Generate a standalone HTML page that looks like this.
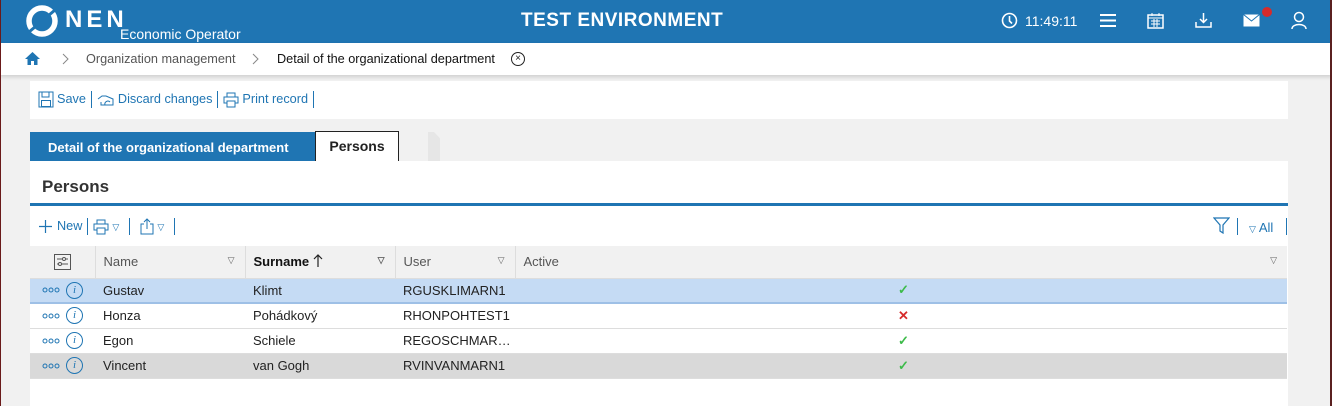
<!DOCTYPE html><html><head><style>
*{margin:0;padding:0;box-sizing:border-box}
body{width:1332px;height:406px;overflow:hidden;background:#f1f1f1;font-family:"Liberation Sans",sans-serif;position:relative;font-size:13px;color:#222}
.abs{position:absolute}
.hdr{left:0;top:0;width:1332px;height:43px;background:#1f75b3;color:#fff}
.bc{left:0;top:43px;width:1332px;height:32px;background:#fff;box-shadow:0 2px 4px rgba(0,0,0,.15)}
.sep{display:inline-block;width:1px;height:17px;background:#1f75b3;vertical-align:middle;margin:0 5px}
.blue{color:#1f75b3}
.ic{vertical-align:middle;margin-right:3px}
table{border-collapse:collapse;position:absolute;left:30px;top:246px;width:1257px}
td{height:25px;border-bottom:1px solid #ddd;padding-left:8px;font-size:13px}
th{height:32px;background:#f1f1f1;font-weight:normal;color:#555;text-align:left;padding-left:8px;border-right:1px solid #ddd;border-bottom:1px solid #ddd;position:relative}
th .t{position:absolute;right:10px;top:9px;font-size:9px;color:#666}
.inf{display:inline-block;width:17px;height:17px;border:1.3px solid #1f75b3;border-radius:50%;color:#1f75b3;font-size:11px;text-align:center;line-height:15px;margin-left:6px;vertical-align:middle;font-family:"Liberation Serif",serif;font-style:italic}
.ck{color:#3dbb4a;font-weight:bold}
</style></head><body>
<div class="abs" style="left:0;top:0;width:1px;height:406px;background:#6a1a1a;z-index:5"></div>
<div class="abs" style="right:0;top:0;width:2px;height:406px;background:#5a2020;z-index:5"></div>
<div class="abs hdr">
 <svg class="abs" style="left:26px;top:5px" width="32" height="32" viewBox="0 0 32 32"><circle cx="16" cy="16" r="13" fill="none" stroke="#fff" stroke-width="5.5"/><path d="M3 27 L29 5" stroke="#1f75b3" stroke-width="3"/></svg>
 <div class="abs" style="left:65px;top:6px;font-size:24px;font-weight:bold;letter-spacing:4px">NEN</div>
 <div class="abs" style="left:120px;top:26px;font-size:14px">Economic Operator</div>
 <div class="abs" style="left:521px;top:10px;font-size:19px;font-weight:bold;letter-spacing:.5px">TEST ENVIRONMENT</div>
 <svg class="abs" style="left:1001px;top:12px" width="17" height="17"><circle cx="8.5" cy="8.5" r="7" fill="none" stroke="#fff" stroke-width="1.6"/><path d="M8.5 4V9L11 11.5" stroke="#fff" stroke-width="1.6" fill="none"/></svg>
 <div class="abs" style="left:1025px;top:13px;font-size:14px">11:49:11</div>
 <svg class="abs" style="left:1100px;top:13px" width="16" height="15"><path d="M0 2H16M0 7.5H16M0 13H16" stroke="#fff" stroke-width="2"/></svg>
 <svg class="abs" style="left:1147px;top:12px" width="17" height="17"><rect x="1" y="3" width="15" height="13" fill="none" stroke="#fff" stroke-width="1.5"/><path d="M1 6H16M5 1V4M12 1V4M4 9H13M4 12H13M7 7V15M10 7V15" stroke="#fff" stroke-width="1"/></svg>
 <svg class="abs" style="left:1195px;top:12px" width="17" height="17"><path d="M8.5 1V10M5 7L8.5 10.5 12 7M1 10V15H16V10" stroke="#fff" stroke-width="1.5" fill="none"/></svg>
 <svg class="abs" style="left:1243px;top:14px" width="17" height="13"><rect x="0.5" y="0.5" width="16" height="12" fill="#fff"/><path d="M0.5 0.5L8.5 7 16.5 0.5" stroke="#1f75b3" fill="none"/></svg>
 <div class="abs" style="left:1262px;top:7px;width:10px;height:10px;border-radius:50%;background:#d62b2b"></div>
 <svg class="abs" style="left:1291px;top:11px" width="16" height="19"><circle cx="8" cy="6" r="4.5" fill="none" stroke="#fff" stroke-width="1.5"/><path d="M1 18C1 12 15 12 15 18" fill="none" stroke="#fff" stroke-width="1.5"/></svg>
</div>
<div class="abs bc">
 <svg class="abs" style="left:24px;top:8px" width="17" height="15"><path d="M8.5 1L1 8H3.5V14H7V10H10V14H13.5V8H16Z" fill="#1f75b3"/></svg>
 <svg class="abs" style="left:62px;top:10px" width="8" height="12"><path d="M1 1L6 6 1 11" stroke="#888" fill="none"/></svg>
 <div class="abs" style="left:86px;top:9px;color:#555;font-size:12.7px">Organization management</div>
 <svg class="abs" style="left:252px;top:10px" width="8" height="12"><path d="M1 1L6 6 1 11" stroke="#888" fill="none"/></svg>
 <div class="abs" style="left:277px;top:9px;color:#111;font-size:12.7px">Detail of the organizational department</div>
 <div class="abs" style="left:511px;top:9px;width:14px;height:14px;border:1.2px solid #222;border-radius:50%;font-size:10px;text-align:center;line-height:11px">×</div>
</div>
<div class="abs" style="left:30px;top:81px;width:1258px;height:38px;background:#fff;padding:10px 0 0 8px;font-size:12.7px">
 <svg class="ic" width="16" height="17"><rect x="1" y="1" width="14" height="15" fill="none" stroke="#1f75b3"/><rect x="4" y="1" width="7" height="5" fill="none" stroke="#1f75b3"/><rect x="3.5" y="9.5" width="9" height="6" fill="none" stroke="#1f75b3"/></svg><span class="blue">Save</span><span class="sep"></span><svg class="ic" width="18" height="14"><path d="M1 6L5 3 9 3 16 6 16 12 4 12 4 9" fill="none" stroke="#1f75b3"/><path d="M8 12A3 3 0 0 1 13 9" fill="none" stroke="#1f75b3"/></svg><span class="blue">Discard changes</span><span class="sep"></span><svg class="ic" width="16" height="16"><rect x="4" y="1" width="8" height="4" fill="none" stroke="#1f75b3"/><rect x="1" y="5" width="14" height="6" fill="none" stroke="#1f75b3"/><rect x="4" y="9" width="8" height="6" fill="#fff" stroke="#1f75b3"/></svg><span class="blue">Print record</span><span class="sep"></span>
</div>
<svg class="abs" style="left:30px;top:132px" width="410" height="30"><polygon points="0,0 293,0 315,29 0,29" fill="#1f75b3"/><polygon points="398,0 404,0 432,29 398,29" fill="#e6e6e6"/></svg>
<div class="abs" style="left:48px;top:140px;color:#fff;font-weight:bold;font-size:13px">Detail of the organizational department</div>
<div class="abs" style="left:315px;top:131px;width:84px;height:31px;border:1px solid #222;background:#fff;font-weight:bold;font-size:14px;text-align:center;line-height:29px">Persons</div>
<div class="abs" style="left:30px;top:161px;width:1258px;height:245px;background:#fff"></div>
<div class="abs" style="left:42px;top:177px;font-size:17px;font-weight:bold;color:#333">Persons</div>
<div class="abs" style="left:30px;top:203px;width:1258px;height:3px;background:#1f75b3"></div>
<div class="abs" style="left:39px;top:218px;font-size:12.7px;white-space:nowrap"><svg class="ic" style="margin-right:5px" width="13" height="13"><path d="M6.5 0V13M0 6.5H13" stroke="#1f75b3" stroke-width="1.2"/></svg><span class="blue">New</span><span class="sep"></span><svg class="ic" width="16" height="16"><rect x="4" y="1" width="8" height="4" fill="none" stroke="#1f75b3"/><rect x="1" y="5" width="14" height="6" fill="none" stroke="#1f75b3"/><rect x="4" y="9" width="8" height="6" fill="#fff" stroke="#1f75b3"/></svg><span class="blue" style="font-size:9px">▽</span><span class="sep" style="margin-left:10px"></span><svg class="ic" style="margin-left:5px" width="14" height="17"><path d="M4 6H1V16H13V6H10M7 11V1M4 4L7 1 10 4" fill="none" stroke="#1f75b3"/></svg><span class="blue" style="font-size:9px">▽</span><span class="sep" style="margin-left:10px"></span></div>
<svg class="abs" style="left:1213px;top:217px" width="17" height="17"><path d="M1 1H16L10 8V16L7 14V8Z" fill="none" stroke="#1f75b3" stroke-width="1.2"/></svg>
<div class="abs" style="left:1237px;top:218px;width:1px;height:17px;background:#1f75b3"></div>
<div class="abs blue" style="left:1249px;top:220px"><span style="font-size:9px">▽</span> All</div>
<div class="abs" style="left:1286px;top:218px;width:1px;height:17px;background:#1f75b3"></div>
<table>
<tr><th style="width:65px;text-align:center;padding:0"><svg width="17" height="16" style="vertical-align:middle"><rect x="0.5" y="0.5" width="16" height="15" fill="none" stroke="#555"/><path d="M3 5H14M3 10H14" stroke="#555"/><circle cx="10" cy="5" r="1.5" fill="#fff" stroke="#555"/><circle cx="6" cy="10" r="1.5" fill="#fff" stroke="#555"/></svg></th><th style="width:150px">Name<span class="t">▽</span></th><th style="width:150px;color:#111;font-weight:bold">Surname <svg width="10" height="13" style="vertical-align:-1px"><path d="M5 1V13M1 5L5 1 9 5" fill="none" stroke="#222" stroke-width="1.2"/></svg><span class="t">▽</span></th><th style="width:120px">User<span class="t">▽</span></th><th style="border-right:0">Active<span class="t">▽</span></th></tr>
<tr style="background:#c5dbf4;border-bottom:2px solid #9ec0e6"><td style="padding-left:12px"><svg width="18" height="6" style="vertical-align:middle"><circle cx="3" cy="3" r="2" fill="none" stroke="#1f75b3"/><circle cx="9" cy="3" r="2" fill="none" stroke="#1f75b3"/><circle cx="15" cy="3" r="2" fill="none" stroke="#1f75b3"/></svg><span class="inf">i</span></td><td>Gustav</td><td>Klimt</td><td>RGUSKLIMARN1</td><td style="padding-left:383px"><span class="ck">✓</span></td></tr>
<tr><td style="padding-left:12px"><svg width="18" height="6" style="vertical-align:middle"><circle cx="3" cy="3" r="2" fill="none" stroke="#1f75b3"/><circle cx="9" cy="3" r="2" fill="none" stroke="#1f75b3"/><circle cx="15" cy="3" r="2" fill="none" stroke="#1f75b3"/></svg><span class="inf">i</span></td><td>Honza</td><td>Pohádkový</td><td>RHONPOHTEST1</td><td style="padding-left:383px"><span style="color:#d62b2b;font-weight:bold">✕</span></td></tr>
<tr><td style="padding-left:12px"><svg width="18" height="6" style="vertical-align:middle"><circle cx="3" cy="3" r="2" fill="none" stroke="#1f75b3"/><circle cx="9" cy="3" r="2" fill="none" stroke="#1f75b3"/><circle cx="15" cy="3" r="2" fill="none" stroke="#1f75b3"/></svg><span class="inf">i</span></td><td>Egon</td><td>Schiele</td><td>REGOSCHMAR…</td><td style="padding-left:383px"><span class="ck">✓</span></td></tr>
<tr style="background:#d9d9d9"><td style="padding-left:12px"><svg width="18" height="6" style="vertical-align:middle"><circle cx="3" cy="3" r="2" fill="none" stroke="#1f75b3"/><circle cx="9" cy="3" r="2" fill="none" stroke="#1f75b3"/><circle cx="15" cy="3" r="2" fill="none" stroke="#1f75b3"/></svg><span class="inf">i</span></td><td>Vincent</td><td>van Gogh</td><td>RVINVANMARN1</td><td style="padding-left:383px"><span class="ck">✓</span></td></tr>
</table>
</body></html>
